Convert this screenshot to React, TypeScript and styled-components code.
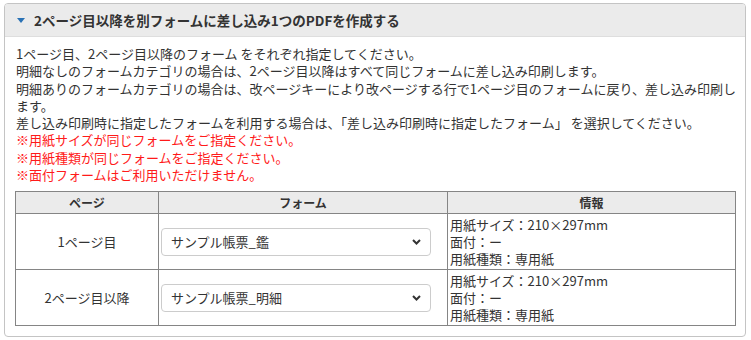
import React from "react";
import styled, { createGlobalStyle } from "styled-components";

const GlobalStyle = createGlobalStyle`
  html, body {
    margin: 0;
    padding: 0;
    background: #fff;
  }
  body {
    font-family: "Noto Sans CJK JP", "Noto Sans", sans-serif;
    color: #333;
  }
`;

const Page = styled.div`
  padding: 3px 5px 0 4px;
  width: 742px;
`;

const Panel = styled.section`
  border: 1px solid #c4c4c4;
  border-radius: 4px;
  overflow: hidden;
  background: #fff;
`;

const Header = styled.div`
  display: flex;
  align-items: center;
  gap: 9px;
  height: 32px;
  padding-left: 12px;
  background: #ebebeb;
  border-bottom: 1px solid #dedede;
`;

const Caret = styled.svg`
  width: 8px;
  height: 5px;
  flex: none;
`;

const Title = styled.h3`
  margin: 0;
  font-size: 13.5px;
  font-weight: 700;
  color: #333;
`;

const Body = styled.div`
  padding: 8px 9px 10px 10px;
`;

const Note = styled.p<{ $warn?: boolean }>`
  margin: 0 0 0 1px;
  font-size: 13px;
  line-height: 17.3px;
  color: ${(p) => (p.$warn ? "#ff1a1a" : "#333")};
`;

const Table = styled.table`
  margin-top: 8px;
  border-collapse: collapse;
  table-layout: fixed;
  font-size: 13px;
  color: #333;
`;

const Col = styled.col<{ $w: number }>`
  width: ${(p) => p.$w}px;
`;

const Th = styled.th`
  height: 21px;
  padding: 0;
  background: #ebebeb;
  border: 1px solid #858585;
  font-size: 12px;
  font-weight: 700;
  text-align: center;
  vertical-align: middle;
`;

const Td = styled.td<{ $center?: boolean }>`
  height: 55px;
  padding: 0 2px;
  border: 1px solid #858585;
  text-align: ${(p) => (p.$center ? "center" : "left")};
  vertical-align: middle;
  line-height: 17px;
`;

const SelectWrap = styled.div`
  position: relative;
  width: 270px;
`;

const Select = styled.select`
  appearance: none;
  display: block;
  width: 100%;
  height: 28px;
  padding: 0 28px 0 9px;
  border: 1px solid #ccc;
  border-radius: 4px;
  background: #fff;
  font-family: "Noto Sans CJK JP", "Noto Sans", sans-serif;
  font-size: 13px;
  color: #333;
`;

const Chevron = styled.svg`
  position: absolute;
  right: 10px;
  top: 11px;
  width: 9px;
  height: 6px;
  pointer-events: none;
`;

const InfoLine = styled.div`
  white-space: nowrap;
  line-height: 17px;
`;

const rows = [
  { page: "1ページ目", form: "サンプル帳票_鑑" },
  { page: "2ページ目以降", form: "サンプル帳票_明細" },
];

export default function App() {
  return (
    <>
      <GlobalStyle />
      <Page>
        <Panel>
          <Header>
            <Caret viewBox="0 0 8 5">
              <path d="M0 0 L8 0 L4 5 Z" fill="#2a72b5" />
            </Caret>
            <Title>2ページ目以降を別フォームに差し込み1つのPDFを作成する</Title>
          </Header>
          <Body>
            <Note>1ページ目、2ページ目以降のフォーム をそれぞれ指定してください。</Note>
            <Note>明細なしのフォームカテゴリの場合は、2ページ目以降はすべて同じフォームに差し込み印刷します。</Note>
            <Note>明細ありのフォームカテゴリの場合は、改ページキーにより改ページする行で1ページ目のフォームに戻り、差し込み印刷します。</Note>
            <Note>差し込み印刷時に指定したフォームを利用する場合は、「差し込み印刷時に指定したフォーム」 を選択してください。</Note>
            <Note $warn>※用紙サイズが同じフォームをご指定ください。</Note>
            <Note $warn>※用紙種類が同じフォームをご指定ください。</Note>
            <Note $warn>※面付フォームはご利用いただけません。</Note>
            <Table>
              <colgroup>
                <Col $w={143} />
                <Col $w={289} />
                <Col $w={288} />
              </colgroup>
              <thead>
                <tr>
                  <Th>ページ</Th>
                  <Th>フォーム</Th>
                  <Th>情報</Th>
                </tr>
              </thead>
              <tbody>
                {rows.map((r) => (
                  <tr key={r.page}>
                    <Td $center>{r.page}</Td>
                    <Td>
                      <SelectWrap>
                        <Select defaultValue={r.form}>
                          <option>{r.form}</option>
                        </Select>
                        <Chevron viewBox="0 0 9 6">
                          <path d="M1 1 L4.5 4.5 L8 1" fill="none" stroke="#333" strokeWidth="2" />
                        </Chevron>
                      </SelectWrap>
                    </Td>
                    <Td>
                      <InfoLine>用紙サイズ：210×297mm</InfoLine>
                      <InfoLine>面付：ー</InfoLine>
                      <InfoLine>用紙種類：専用紙</InfoLine>
                    </Td>
                  </tr>
                ))}
              </tbody>
            </Table>
          </Body>
        </Panel>
      </Page>
    </>
  );
}
